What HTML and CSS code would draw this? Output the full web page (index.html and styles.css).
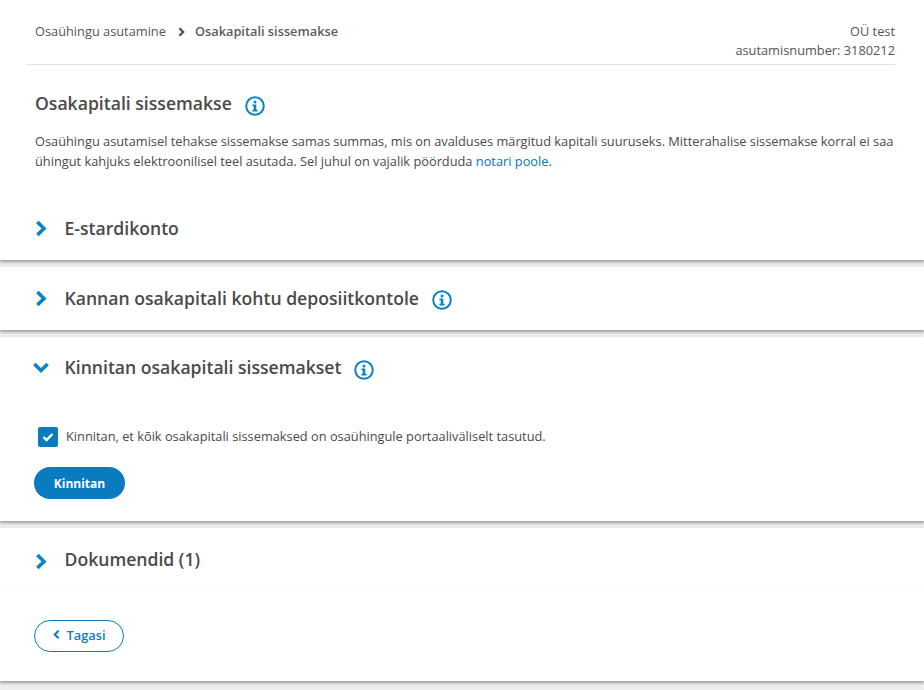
FILE: index.html
```html
<!DOCTYPE html>
<html lang="et">
<head>
    <meta charset="UTF-8">
    <title>Osakapitali sissemakse</title>
    <link rel="stylesheet" href="styles.css">
</head>
<body>
    <svg class="icon-defs" width="0" height="0">
        <symbol id="info" viewBox="0 0 20 20">
            <circle cx="10" cy="10" r="8.8" fill="none" stroke="currentColor" stroke-width="2"/>
            <circle cx="10" cy="5.9" r="1.5" fill="currentColor"/>
            <path d="M7.4 8.5h3.9v5.2h1.3v1.7H7.4v-1.7h1.3v-3.5H7.4z" fill="currentColor"/>
        </symbol>
        <symbol id="chevron" viewBox="0 0 10 14">
            <path d="M2 1.5L7.5 7L2 12.5" fill="none" stroke="currentColor" stroke-width="3"/>
        </symbol>
    </svg>

    <section class="card card-top">
        <div class="topbar">
            <div class="breadcrumb">
                <span>Osaühingu asutamine</span>
                <svg class="crumb-arrow"><use href="#chevron"/></svg>
                <span class="crumb-current">Osakapitali sissemakse</span>
            </div>
            <div class="company">
                <div>OÜ test</div>
                <div>asutamisnumber: 3180212</div>
            </div>
        </div>
        <div class="intro">
            <h1>Osakapitali sissemakse <svg class="info info-title"><use href="#info"/></svg></h1>
            <p>Osaühingu asutamisel tehakse sissemakse samas summas, mis on avalduses märgitud kapitali suuruseks. Mitterahalise sissemakse korral ei saa ühingut kahjuks elektroonilisel teel asutada. Sel juhul on vajalik pöörduda <a href="#">notari poole</a>.</p>
        </div>
        <div class="row row-first">
            <svg class="arrow"><use href="#chevron"/></svg>
            <h2>E-stardikonto</h2>
        </div>
    </section>

    <section class="card">
        <div class="row">
            <svg class="arrow"><use href="#chevron"/></svg>
            <h2>Kannan osakapitali kohtu deposiitkontole</h2>
            <svg class="info"><use href="#info"/></svg>
        </div>
    </section>

    <section class="card">
        <div class="row row-open">
            <svg class="arrow arrow-open"><use href="#chevron"/></svg>
            <h2>Kinnitan osakapitali sissemakset</h2>
            <svg class="info"><use href="#info"/></svg>
        </div>
        <div class="confirm">
            <label class="check">
                <span class="checkbox">
                    <svg width="12" height="10" viewBox="0 0 12 10"><path d="M1.5 5l3 3l6-6" fill="none" stroke="#fff" stroke-width="2.4"/></svg>
                </span>
                <span>Kinnitan, et kõik osakapitali sissemaksed on osaühingule portaaliväliselt tasutud.</span>
            </label>
            <button class="btn btn-primary">Kinnitan</button>
        </div>
    </section>

    <section class="card card-last">
        <div class="row row-docs">
            <svg class="arrow arrow-low"><use href="#chevron"/></svg>
            <h2>Dokumendid (1)</h2>
        </div>
        <div class="footer">
            <button class="btn btn-back"><svg class="back-arrow"><use href="#chevron"/></svg>Tagasi</button>
        </div>
    </section>
</body>
</html>
```

FILE: styles.css
```css
body {
    margin: 0;
    background: #eeeeee;
    color: #4a4a4a;
    font-family: "Open Sans", sans-serif;
    font-size: 12.8px;
    line-height: 19.2px;
    height: 690px;
    overflow: hidden;
}
.icon-defs {
    position: absolute;
}
.card {
    background: #fff;
    margin-bottom: 7px;
    box-shadow: 0 2px 3px rgba(0, 0, 0, 0.35);
}
.topbar {
    display: flex;
    justify-content: space-between;
    margin: 0 29px 0 26px;
    padding: 22px 0 0 9px;
    height: 42px;
    border-bottom: 1px solid #e4e4e4;
    color: #555;
}
.breadcrumb {
    display: flex;
    align-items: flex-start;
}
.crumb-arrow {
    width: 7px;
    height: 10px;
    margin: 5px 10px 0 12px;
    color: #4a4a4a;
}
.crumb-current {
    font-weight: 600;
    color: #5c5c5c;
}
.company {
    text-align: right;
}
.intro {
    padding: 0 29px 0 35px;
}
h1 {
    margin: 25px 0 0;
    font-size: 17.6px;
    line-height: 26px;
    font-weight: 600;
    display: flex;
    align-items: center;
}
.info {
    width: 20px;
    height: 20px;
    color: #0a82c4;
    margin-left: 13px;
    margin-top: 3px;
    flex: none;
}
.info-title {
    margin-top: 6px;
}
.row-open .info {
    margin-top: 5px;
}
.intro p {
    margin: 16.4px 0 0;
}
a {
    color: #0a74b4;
    text-decoration: none;
}
.row {
    display: flex;
    align-items: center;
    padding: 18px 0 18px 35px;
    height: 27px;
}
.row-first {
    margin-top: 26.2px;
    padding-bottom: 17.6px;
}
.row-open {
    padding: 17px 0 19px 35px;
}
h2 {
    margin: 0 0 0 -0.5px;
    font-size: 17.6px;
    line-height: 27px;
    font-weight: 600;
}
.arrow {
    width: 12px;
    height: 17px;
    margin-right: 18px;
    color: #0a82c4;
    flex: none;
}
.arrow-open {
    transform: rotate(90deg);
}
.arrow-low {
    margin-top: 5px;
}
.confirm {
    padding: 27px 0 22px 34px;
}
.check {
    display: flex;
    align-items: center;
    margin-bottom: 20px;
    padding-left: 4px;
}
.checkbox {
    width: 20px;
    height: 20px;
    background: #0a7bbf;
    border-radius: 2px;
    margin-right: 8px;
    display: flex;
    align-items: center;
    justify-content: center;
}
.btn {
    display: flex;
    align-items: center;
    justify-content: center;
    height: 32px;
    width: 91px;
    border-radius: 16px;
    font-family: "Open Sans", sans-serif;
    font-size: 12px;
    font-weight: 700;
    padding: 0;
}
.btn-primary {
    background: #0a7bbf;
    border: 0;
    color: #fff;
    padding-top: 1px;
}
.btn-back {
    width: 90px;
    background: #fff;
    border: 1px solid #0a7bbf;
    color: #0a7bbf;
    font-size: 12.8px;
    font-weight: 600;
    padding-bottom: 2px;
}
.back-arrow {
    width: 7px;
    height: 11px;
    margin-right: 7px;
    transform: rotate(180deg);
}
.row-docs {
    padding-top: 18px;
    padding-bottom: 15px;
}
.footer {
    border-top: 1px solid #f8f8f8;
    padding: 31px 0 29px 34px;
}
.card-last {
    margin-bottom: 0;
}
```
